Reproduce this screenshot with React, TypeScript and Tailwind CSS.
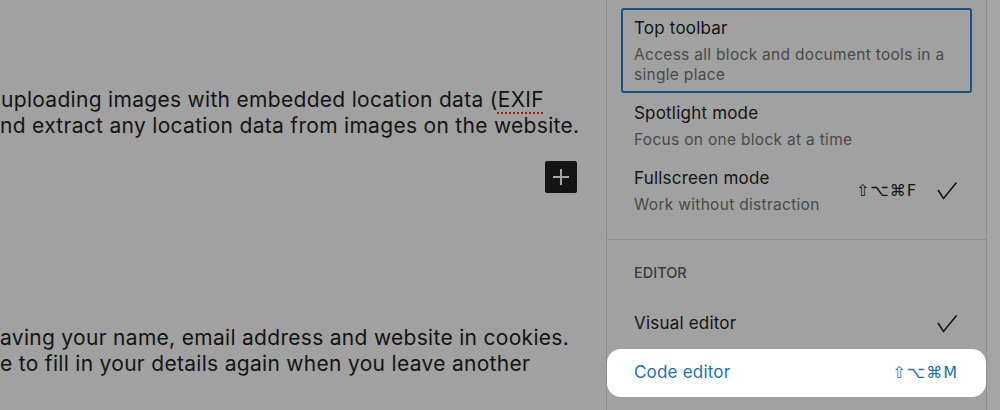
import React from 'react';

const font = { fontFamily: 'Inter, "Noto Sans", sans-serif' };
const sym = 'font-["DejaVu_Sans",Inter,sans-serif]';

function Check() {
  return (
    <svg width="24" height="20" viewBox="0 0 24 20" className="shrink-0">
      <polyline points="3,9 8.5,17.5 21.5,1.5" fill="none" stroke="#141414" strokeWidth="1.6" strokeLinejoin="miter" />
    </svg>
  );
}

function Item({ title, desc, shortcut, checked, boxed }: {
  title: string; desc: string | string[]; shortcut?: string; checked?: boolean; boxed?: boolean;
}) {
  const lines = Array.isArray(desc) ? desc : [desc];
  return (
    <div className={`flex items-center border-2 rounded-[3px] px-[11px] py-[6px] ${boxed ? 'border-[#1d4f80]' : 'border-transparent'}`}>
      <div className="flex-1">
        <div className="text-[17px] leading-[24px] tracking-[0.2px] text-[#141414]">{title}</div>
        <div className="mt-[5px] text-[15.5px] leading-[20px] tracking-[0.3px] text-[#4a4a4a]">
          {lines.map(l => <div key={l}>{l}</div>)}
        </div>
      </div>
      {shortcut && <span className={`text-[16px] text-[#141414] tracking-[1px] mr-[18px] ${sym}`}>{shortcut}</span>}
      {checked && <Check />}
    </div>
  );
}

export default function App() {
  return (
    <div className="w-[1000px] h-[410px] overflow-hidden bg-[#a1a1a1] flex" style={font}>
      {/* editor canvas */}
      <div className="w-[606px] shrink-0 overflow-hidden flex flex-col text-[21px] leading-[26px] tracking-[0.3px] text-[#141414]">
        <div className="mt-[87px] whitespace-nowrap pl-[1px]">
          <div>uploading images with embedded location data (<span className="underline decoration-dotted decoration-[#a31515] decoration-2 underline-offset-[5px]">EXIF</span></div>
          <div className="-ml-[1px]">nd extract any location data from images on the website.</div>
        </div>
        <div className="mt-[22px] ml-[545px] w-[32px] h-[32px] rounded-[2px] bg-[#151515] flex items-center justify-center">
          <svg width="20" height="20" viewBox="0 0 20 20">
            <path d="M10 2v16M2 10h16" stroke="#a6a6a6" strokeWidth="2" />
          </svg>
        </div>
        <div className="mt-[132px] whitespace-nowrap">
          <div>aving your name, email address and website in cookies.</div>
          <div>e to fill in your details again when you leave another</div>
        </div>
      </div>

      {/* options menu */}
      <div className="w-[381px] shrink-0 border-l border-r border-[#8d8d8d] flex flex-col">
        <div className="px-[14px] pt-[8px] pb-[16px]">
          <Item boxed title="Top toolbar" desc={['Access all block and document tools in a', 'single place']} />
          <Item title="Spotlight mode" desc="Focus on one block at a time" />
          <Item title="Fullscreen mode" desc="Work without distraction" shortcut="⇧⌥⌘F" checked />
        </div>
        <div className="border-t border-[#8d8d8d] px-[14px]">
          <div className="mt-[25px] px-[13px] text-[14.5px] leading-[16px] font-medium uppercase text-[#3b3b3b]">Editor</div>
          <div className="mt-[19px] h-[48px] flex items-center px-[13px]">
            <span className="flex-1 text-[17px] tracking-[0.2px] text-[#141414]">Visual editor</span>
            <Check />
          </div>
          <div className="mt-[1px] -mx-[14px] h-[48px] bg-white rounded-[14px] flex items-center pl-[27px] pr-[28px]">
            <span className="flex-1 text-[17px] tracking-[0.2px] text-[#2271b1]">Code editor</span>
            <span className={`text-[16px] text-[#2271b1] tracking-[1px] ${sym}`}>⇧⌥⌘M</span>
          </div>
        </div>
      </div>

      <div className="flex-1 bg-[#a4a4a4]" />
    </div>
  );
}
